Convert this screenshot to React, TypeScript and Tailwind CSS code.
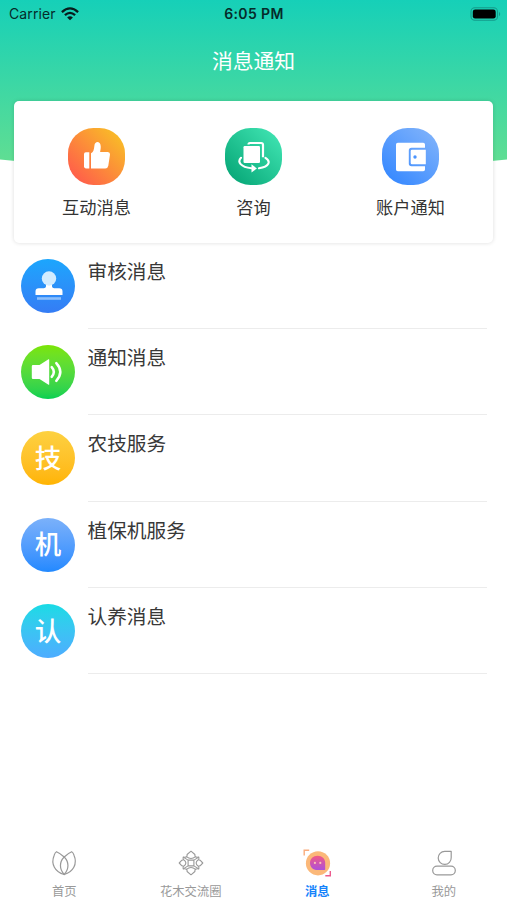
import React from 'react';

const ThumbIcon: React.FC = () => (
  <svg className="w-[57px] h-[57px]" viewBox="0 0 57 57">
    <defs>
      <linearGradient id="thumb" x1="0.1" y1="0.9" x2="0.9" y2="0.1">
        <stop offset="0" stopColor="#ff5c4b" />
        <stop offset="1" stopColor="#f9bd27" />
      </linearGradient>
    </defs>
    <rect width="57" height="57" rx="25.5" fill="url(#thumb)" />
    <path d="M17.8 24.2h3.5v16.2h-3.5q-1.8 0-1.8-1.8V26q0-1.8 1.8-1.8z" fill="#fff" />
    <path d="M23 40.4V25.3c2.3-1.2 3-3.4 3.4-7.6.3-4.6 5.8-5 6.3.2.2 2.2-.2 4.1-.6 6h7.7q2.4.2 2.2 2.6l-1.7 11.2q-.5 2.7-3 2.7z" fill="#fff" />
  </svg>
);

const ConsultIcon: React.FC = () => (
  <svg className="w-[57px] h-[57px]" viewBox="0 0 57 57">
    <defs>
      <linearGradient id="consult" x1="0.1" y1="0.9" x2="0.9" y2="0.1">
        <stop offset="0" stopColor="#08a878" />
        <stop offset="1" stopColor="#3ee2b0" />
      </linearGradient>
    </defs>
    <rect width="57" height="57" rx="25.5" fill="url(#consult)" />
    <path d="M23.5 16.5q0-1.5 1.4-1.5h11.3q1.8 0 1.8 1.8v12.5" fill="none" stroke="#fff" strokeWidth="2.2" />
    <rect x="18.5" y="18" width="16.5" height="17" rx="1.2" fill="#fff" />
    <path d="M16 29.8C12 34 15.5 39 26.5 40.3M34 40.3c10.5-1.5 12-7 6.5-10.5" fill="none" stroke="#fff" strokeWidth="2.1" strokeLinecap="round" />
    <path d="M26.5 36.3l5.4 4.2-5.4 3.9z" fill="#fff" />
  </svg>
);

const WalletIcon: React.FC = () => (
  <svg className="w-[57px] h-[57px]" viewBox="0 0 57 57">
    <defs>
      <linearGradient id="wallet" x1="0.15" y1="0.9" x2="0.85" y2="0.1">
        <stop offset="0" stopColor="#398aff" />
        <stop offset="1" stopColor="#7bb0fb" />
      </linearGradient>
    </defs>
    <rect width="57" height="57" rx="25.5" fill="url(#wallet)" />
    <path d="M15.8 14.8h25.4q1.8 0 1.8 1.8v3.2H29.5q-2.7 0-2.7 2.7v13q0 2.7 2.7 2.7H43v3.2q0 1.8-1.8 1.8H15.8q-1.8 0-1.8-1.8V16.6q0-1.8 1.8-1.8z" fill="#fff" />
    <path d="M30 21.8h13.8v14.4H30q-1.3 0-1.3-1.3V23.1q0-1.3 1.3-1.3z" fill="#fff" />
    <circle cx="33" cy="29" r="1.7" fill="#4b94fe" />
  </svg>
);

const StampIcon: React.FC = () => (
  <svg className="w-[54px] h-[54px]" viewBox="0 0 54 54">
    <path d="M25 22h6v5.5q.3 1.8 2.2 1.8h5q3.3 0 3.3 3.2V36H14.500v-3.500q0-3.200 3.300-3.200h5q1.900 0 2.200-1.800z" fill="#fff" />
    <circle cx="28" cy="19.5" r="7.2" fill="#d2ecff" />
    <path d="M16 38.2h24v2.6H16z" fill="#8cbffc" />
  </svg>
);

const SpeakerIcon: React.FC = () => (
  <svg className="w-[54px] h-[54px]" viewBox="0 0 54 54">
    <path d="M12 20h6.5l9-5.7q.7-.3.7.5v24.4q0 .8-.7.5l-9-5.7H12q-1.2 0-1.2-1.2V21.2Q10.8 20 12 20z" fill="#fff" />
    <path d="M30.7 22.2q4.3 4.8 0 9.6M35.3 18.2q8 8.8 0 17.6" fill="none" stroke="#fff" strokeWidth="2.5" strokeLinecap="round" />
  </svg>
);

const shortcuts = [
  { title: "互动消息", icon: <ThumbIcon /> },
  { title: "咨询", icon: <ConsultIcon /> },
  { title: "账户通知", icon: <WalletIcon /> },
];

const messages = [
  { title: "审核消息", icon: <StampIcon />, bg: "from-[#1ba6fd] to-[#347cf5]" },
  { title: "通知消息", icon: <SpeakerIcon />, bg: "from-[#7be500] to-[#00d052]" },
  { title: "农技服务", icon: "技", bg: "from-[#fdd140] to-[#ffb400] pb-0.5" },
  { title: "植保机服务", icon: "机", bg: "from-[#7bb1fa] to-[#2189ff] pb-0.5" },
  { title: "认养消息", icon: "认", bg: "from-[#17dbe5] to-[#4dacff] pb-0.5" },
];

const HomeIcon: React.FC = () => (
  <svg className="w-7 h-7" viewBox="0 0 28 28" fill="none" stroke="#999" strokeWidth="1.2" strokeLinejoin="round">
    <path d="M14.2 25.5C5 23 .5 15 4.2 6.2q.8-2.8 2.3-3.500 4 1.700 7.700 5.300 3.500-3.600 7.500-5.300 1.500.7 2.300 3.500C27.800 15 23 23 14.200 25.500z" />
    <path d="M14.2 25.5c-5-5.500-5-12.500 0-17.500 5 5 5 12 0 17.500z" />
  </svg>
);

const FlowerIcon: React.FC = () => (
  <svg className="w-7 h-7" viewBox="0 0 28 28" fill="none" stroke="#999" strokeWidth="1.1" strokeLinejoin="round">
    <path d="M14 2.2l3.9 3.3q-.2 1.5.6 2.2 1.1.9 3.3.4.3 1.5-.2 2.4.6.8 1.5.7l2.7 2.8-2.7 2.8q-.9-.1-1.5.7.5.9.2 2.4-2.200-.5-3.300.4-.8.7-.6 2.200L14 25.800l-3.900-3.300q.2-1.500-.6-2.200-1.100-.9-3.300-.4-.3-1.500.2-2.400-.6-.8-1.500-.7L2.200 14l2.700-2.800q.9.100 1.500-.7-.5-.9-.2-2.400 2.200.5 3.300-.4.800-.7.600-2.200z" />
    <path d="M9.5 7.7q4.5 3.7 9 0M9.5 20.3q4.5-3.7 9 0M6.4 10.5q5 3.5 0 7M21.6 10.5q-5 3.5 0 7" />
    <path d="M6.2 8.1l4.9 3h5.8l4.9-3M6.2 19.9l4.9-3h5.8l4.9 3M11.1 11.1v5.8M16.9 11.1v5.8" />
  </svg>
);

const MessageIcon: React.FC = () => (
  <svg className="w-7 h-7" viewBox="0 0 28 28">
    <defs>
      <linearGradient id="bubble" x1="0" y1="0" x2="0" y2="1">
        <stop offset="0" stopColor="#f15a86" />
        <stop offset="1" stopColor="#ad50da" />
      </linearGradient>
    </defs>
    <circle cx="15" cy="14.3" r="12.1" fill="#fbb879" />
    <path d="M14.6 6.8c4.5 0 7.6 3 7.6 7v6.5q0 .7-.7.7h-6.9C9.9 21 7 17.8 7 13.9s3.1-7.1 7.6-7.1z" fill="url(#bubble)" />
    <circle cx="11.9" cy="13.9" r="1.1" fill="#fbc0b5" />
    <circle cx="17.3" cy="13.9" r="1.1" fill="#fbc0b5" />
    <path d="M1.2 6.5V1.3h5" fill="none" stroke="#f9ac7d" strokeWidth="1.4" />
    <path d="M27.3 22v4.8h-5" fill="none" stroke="#ec5b8e" strokeWidth="1.4" />
  </svg>
);

const MineIcon: React.FC = () => (
  <svg className="w-7 h-7" viewBox="0 0 28 28" fill="none" stroke="#999" strokeWidth="1.2" strokeLinejoin="round">
    <path d="M14.7 2.4h6.5v6.2a6.5 6.5 0 1 1-6.5-6.2z" />
    <rect x="2.7" y="17.2" width="22.6" height="8.6" rx="4.3" />
  </svg>
);

const tabs = [
  { title: "首页", icon: <HomeIcon />, color: "text-[#999]" },
  { title: "花木交流圈", icon: <FlowerIcon />, color: "text-[#999]" },
  { title: "消息", icon: <MessageIcon />, color: "text-[#1683fb] font-bold" },
  { title: "我的", icon: <MineIcon />, color: "text-[#999]" },
];

const StatusBar: React.FC = () => (
  <div className="h-[27px] grid grid-cols-3 items-center pl-[9px] pr-[6px] text-[14px] font-['Inter',sans-serif] text-[#052b2a]">
    <div className="flex items-center gap-[5px]">
      <span className="tracking-[0.1px]">Carrier</span>
      <svg className="w-[18px] h-[14px]" viewBox="0 0 18 14" fill="none" stroke="#071d1c" strokeWidth="2.3">
        <path d="M.9 5.1q8.1-7.4 16.2 0M3.9 8.2q5.1-4.6 10.2 0" />
        <path d="M9 13.3L6.1 10.500q2.900-2.500 5.800 0z" fill="#071d1c" stroke="none" />
      </svg>
    </div>
    <span className="-ml-[2px] text-center font-semibold tracking-[0.4px]">6:05 PM</span>
    <svg className="w-[31px] h-[14px] justify-self-end" viewBox="0 0 31 14">
      <rect x="1" y=".7" width="26.5" height="12.6" rx="3.8" fill="none" stroke="#149b8b" strokeWidth="1.1" />
      <rect x="2.8" y="2.5" width="22.9" height="9" rx="2.3" fill="#000" />
      <path d="M29 4.7q2.4 2.3 0 4.6z" fill="#149b8b" />
    </svg>
  </div>
);

const App: React.FC = () => {
  return (
    <div className="relative w-full h-[900px] flex flex-col overflow-hidden bg-white font-['Noto_Sans_CJK_SC',sans-serif]">
      <svg className="absolute inset-x-0 top-0 w-full h-[180px]" viewBox="0 0 507 180" preserveAspectRatio="none">
        <defs>
          <linearGradient id="header" gradientUnits="userSpaceOnUse" x1="0" y1="0" x2="0" y2="165">
            <stop offset="0" stopColor="#16d0b8" />
            <stop offset="1" stopColor="#61de92" />
          </linearGradient>
        </defs>
        <path d="M0 0h507v159.5q-253.5 28-507 0z" fill="url(#header)" />
      </svg>

      <header className="relative">
        <StatusBar />
        <h1 className="h-[66px] text-center text-[20.8px] leading-[66px] text-white">消息通知</h1>
      </header>

      <section className="relative mx-[14px] mt-[7.5px] h-[142px] px-1 pt-[27px] grid grid-cols-3 rounded-[5px] bg-white shadow-[0_0_4px_rgba(0,0,0,0.14)]">
        {shortcuts.map((item) => (
          <div key={item.title} className="flex flex-col items-center">
            {item.icon}
            <span className="mt-[10px] text-[17.2px] leading-6 text-[#333]">{item.title}</span>
          </div>
        ))}
      </section>

      <main className="flex-1 pt-[0.5px] pl-[21px] pr-5">
        {messages.map((item) => (
          <div key={item.title} className="h-[86.2px] flex gap-[12.5px]">
            <div className={`mt-4 w-[54px] h-[54px] shrink-0 rounded-full bg-linear-to-b flex items-center justify-center text-[26.5px] leading-none font-medium text-white ${item.bg}`}>
              {item.icon}
            </div>
            <div className="flex-1 pt-[14px] border-b border-[#ececec]">
              <p className="text-[19.7px] leading-7 text-[#383838]">{item.title}</p>
            </div>
          </div>
        ))}
      </main>

      <nav className="h-[51px] pl-px grid grid-cols-4">
        {tabs.map((tab) => (
          <div key={tab.title} className={`flex flex-col items-center ${tab.color}`}>
            {tab.icon}
            <span className="mt-[6px] text-[12.3px] leading-4">{tab.title}</span>
          </div>
        ))}
      </nav>
    </div>
  );
};

export default App;
